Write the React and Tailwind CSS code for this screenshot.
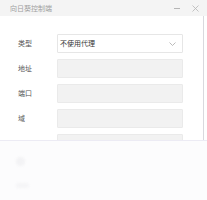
import React from 'react';

const fields = [
  { label: '地址' },
  { label: '端口' },
  { label: '域' },
  { label: '' },
];

const App = () => {
  return (
    <div
      className="relative w-[207px] h-[200px] overflow-hidden bg-white"
      style={{ fontFamily: '"Noto Sans CJK SC", "Liberation Sans", sans-serif' }}
    >
      {/* title bar */}
      <div className="flex items-center h-[16px] bg-[#f4f4f4] pl-[10px] pr-[8px]">
        <span className="text-[7px] leading-none text-[#a0a0a0]">向日葵控制端</span>
        <div className="ml-auto flex items-center gap-[12px] text-[#b5b5b5]">
          <span className="block w-[6px] h-px bg-[#b5b5b5]" />
          <svg width="7" height="7" viewBox="0 0 7 7" stroke="#b5b5b5" strokeWidth="0.8">
            <path d="M0.5 0.5 L6.5 6.5 M6.5 0.5 L0.5 6.5" />
          </svg>
        </div>
      </div>

      {/* form */}
      <div className="mr-[3px] h-[124px] border-r border-[#d9d9de] pt-[18px] pl-[18px] pr-[20px] flex flex-col gap-[6px]">
        <div className="flex items-center">
          <span className="w-[39px] text-[7px] text-[#555]">类型</span>
          <div className="flex items-center w-[126px] h-[19px] border border-[#e6e6e6] rounded-[1px] pl-[2px] pr-[6px]">
            <span className="text-[7px] text-[#333]">不使用代理</span>
            <svg className="ml-auto" width="7" height="4" viewBox="0 0 7 4" fill="none" stroke="#aaa" strokeWidth="0.8">
              <path d="M0.5 0.5 L3.5 3.5 L6.5 0.5" />
            </svg>
          </div>
        </div>
        {fields.map((f, i) => (
          <div key={i} className="flex items-center">
            <span className="w-[39px] text-[7px] text-[#555]">{f.label}</span>
            <div className="w-[126px] h-[19px] bg-[#f2f2f2] border border-[#eaeaea] rounded-[1px]" />
          </div>
        ))}
      </div>

      {/* faded overlay */}
      <div className="absolute left-0 right-0 top-[140px] bottom-0 bg-[#fcfcfd] border-t border-[#ecebf4]">
        <div className="absolute left-[16px] top-[16px] w-[9px] h-[9px] rounded-full bg-[#f3f3f5] blur-[1px]" />
        <div className="absolute left-[16px] top-[42px] w-[13px] h-[5px] rounded bg-[#f5f5f7] blur-[1px]" />
      </div>
    </div>
  );
};

export default App;
